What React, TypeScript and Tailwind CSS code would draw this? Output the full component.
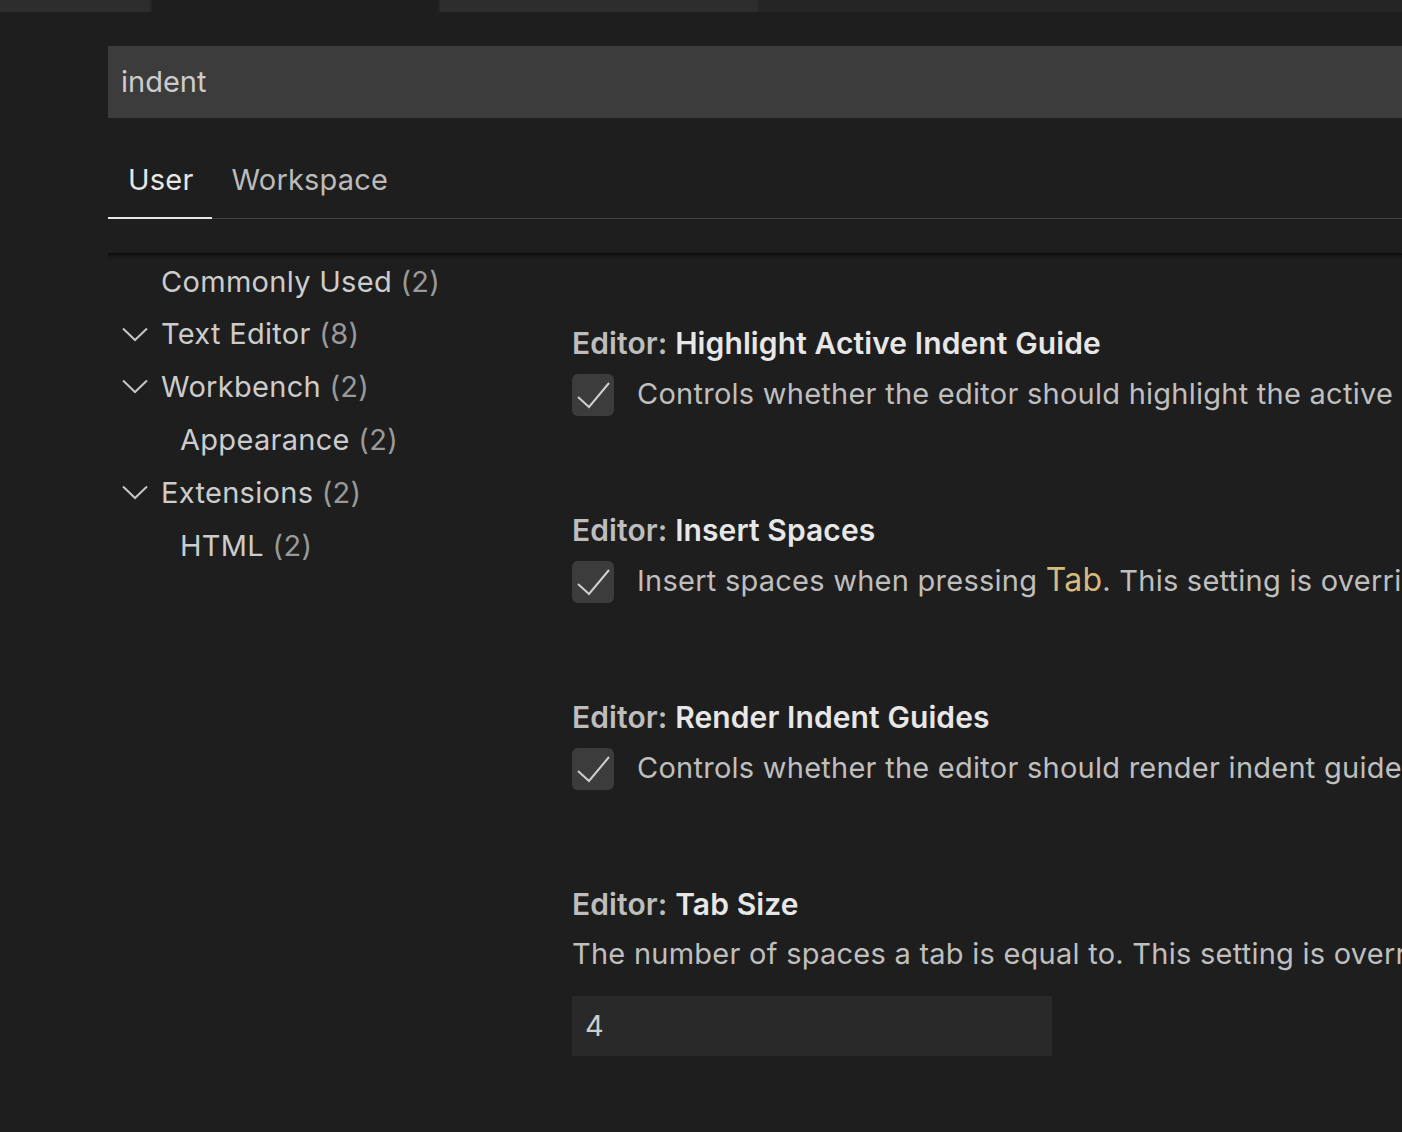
import React from 'react';

const font = { fontFamily: 'Inter, "Noto Sans", sans-serif' };

const Chevron = () => (
  <svg width="26" height="15" viewBox="0 0 26 15" className="shrink-0">
    <polyline points="1,1.5 13,13 25,1.5" fill="none" stroke="#c5c5c5" strokeWidth="2" />
  </svg>
);

const Check = () => (
  <div className="w-[42px] h-[42px] shrink-0 rounded-[6px] bg-[#3c3c3c] flex items-center justify-center">
    <svg width="42" height="42" viewBox="0 0 42 42">
      <polyline points="6,23 17,33 37,9" fill="none" stroke="#cfcfcf" strokeWidth="2" />
    </svg>
  </div>
);

const treeItems = [
  { label: 'Commonly Used', count: 2, chevron: false, indent: 'pl-[53px]' },
  { label: 'Text Editor', count: 8, chevron: true, indent: 'pl-[14px]' },
  { label: 'Workbench', count: 2, chevron: true, indent: 'pl-[14px]' },
  { label: 'Appearance', count: 2, chevron: false, indent: 'pl-[72px]' },
  { label: 'Extensions', count: 2, chevron: true, indent: 'pl-[14px]' },
  { label: 'HTML', count: 2, chevron: false, indent: 'pl-[72px]' },
];

const Title = ({ name }: { name: string }) => (
  <div className="h-[40px] leading-[40px] text-[30px] tracking-[0.1px] font-semibold whitespace-nowrap">
    <span className="text-[#bdbdbd]">Editor: </span>
    <span className="text-[#e7e7e7]">{name}</span>
  </div>
);

const App = () => {
  return (
    <div className="w-[1402px] h-[1132px] bg-[#1e1e1e] overflow-hidden" style={font}>
      {/* editor tab strip */}
      <div className="flex h-[12px]">
        <div className="w-[150px] bg-[#2d2d2d]" />
        <div className="w-[2px] bg-[#252526]" />
        <div className="w-[286px] bg-[#1e1e1e]" />
        <div className="w-[2px] bg-[#252526]" />
        <div className="w-[318px] bg-[#2d2d2d]" />
        <div className="flex-1 bg-[#252526]" />
      </div>

      <div className="pl-[108px] pt-[34px]">
        <div className="h-[72px] bg-[#3c3c3c] flex items-center pl-[13px] text-[29px] text-[#cccccc]">
          indent
        </div>

        <div className="h-[101px] flex items-end border-b border-[#424242]">
          <div className="pl-[20px] pr-[18px] pb-[18px] -mb-px border-b-2 border-[#e7e7e7] text-[29px] leading-[38px] tracking-[0.2px] text-[#e7e7e7]">
            User
          </div>
          <div className="px-[20px] pb-[18px] -mb-px border-b-2 border-transparent text-[29px] leading-[38px] tracking-[0.2px] text-[#bbbbbb]">
            Workspace
          </div>
        </div>

        <div className="h-[34px]" />

        <div className="flex shadow-[inset_0_5px_5px_-4px_#000] h-[900px]">
          <div className="w-[464px] shrink-0 pt-[2px]">
            {treeItems.map((item) => (
              <div key={item.label} className={`h-[52.8px] flex items-center gap-[13px] text-[29px] tracking-[0.3px] ${item.indent}`}>
                {item.chevron && <Chevron />}
                <span className="text-[#cccccc] whitespace-nowrap">
                  {item.label} <span className="text-[#999999]">({item.count})</span>
                </span>
              </div>
            ))}
          </div>

          <div className="flex-1 pt-[70px] text-[29px] tracking-[0.25px]">
            <div className="h-[187px]">
              <Title name="Highlight Active Indent Guide" />
              <div className="mt-[11px] flex items-center gap-[23px] whitespace-nowrap text-[#bfbfbf]">
                <Check />
                <span className="leading-[40px] -mt-[2px]">Controls whether the editor should highlight the active indent guide.</span>
              </div>
            </div>

            <div className="h-[187px]">
              <Title name="Insert Spaces" />
              <div className="mt-[11px] flex items-center gap-[23px] whitespace-nowrap text-[#bfbfbf]">
                <Check />
                <span className="leading-[40px] -mt-[2px]">
                  Insert spaces when pressing <span className="text-[#d7ba7d] text-[32px] leading-[20px]">Tab</span>. This setting is overridden based on the file contents when `Editor: Detect Indentation` is on.
                </span>
              </div>
            </div>

            <div className="h-[187px]">
              <Title name="Render Indent Guides" />
              <div className="mt-[11px] flex items-center gap-[23px] whitespace-nowrap text-[#bfbfbf]">
                <Check />
                <span className="leading-[40px] -mt-[2px]">Controls whether the editor should render indent guides.</span>
              </div>
            </div>

            <div>
              <Title name="Tab Size" />
              <div className="mt-[10px] leading-[40px] whitespace-nowrap text-[#bfbfbf]">
                The number of spaces a tab is equal to. This setting is overridden based on the file contents when `Editor: Detect Indentation` is on.
              </div>
              <div className="mt-[22px] w-[480px] h-[60px] bg-[#292929] flex items-center pl-[13px] text-[#cccccc]">
                4
              </div>
            </div>
          </div>
        </div>
      </div>
    </div>
  );
};

export default App;
